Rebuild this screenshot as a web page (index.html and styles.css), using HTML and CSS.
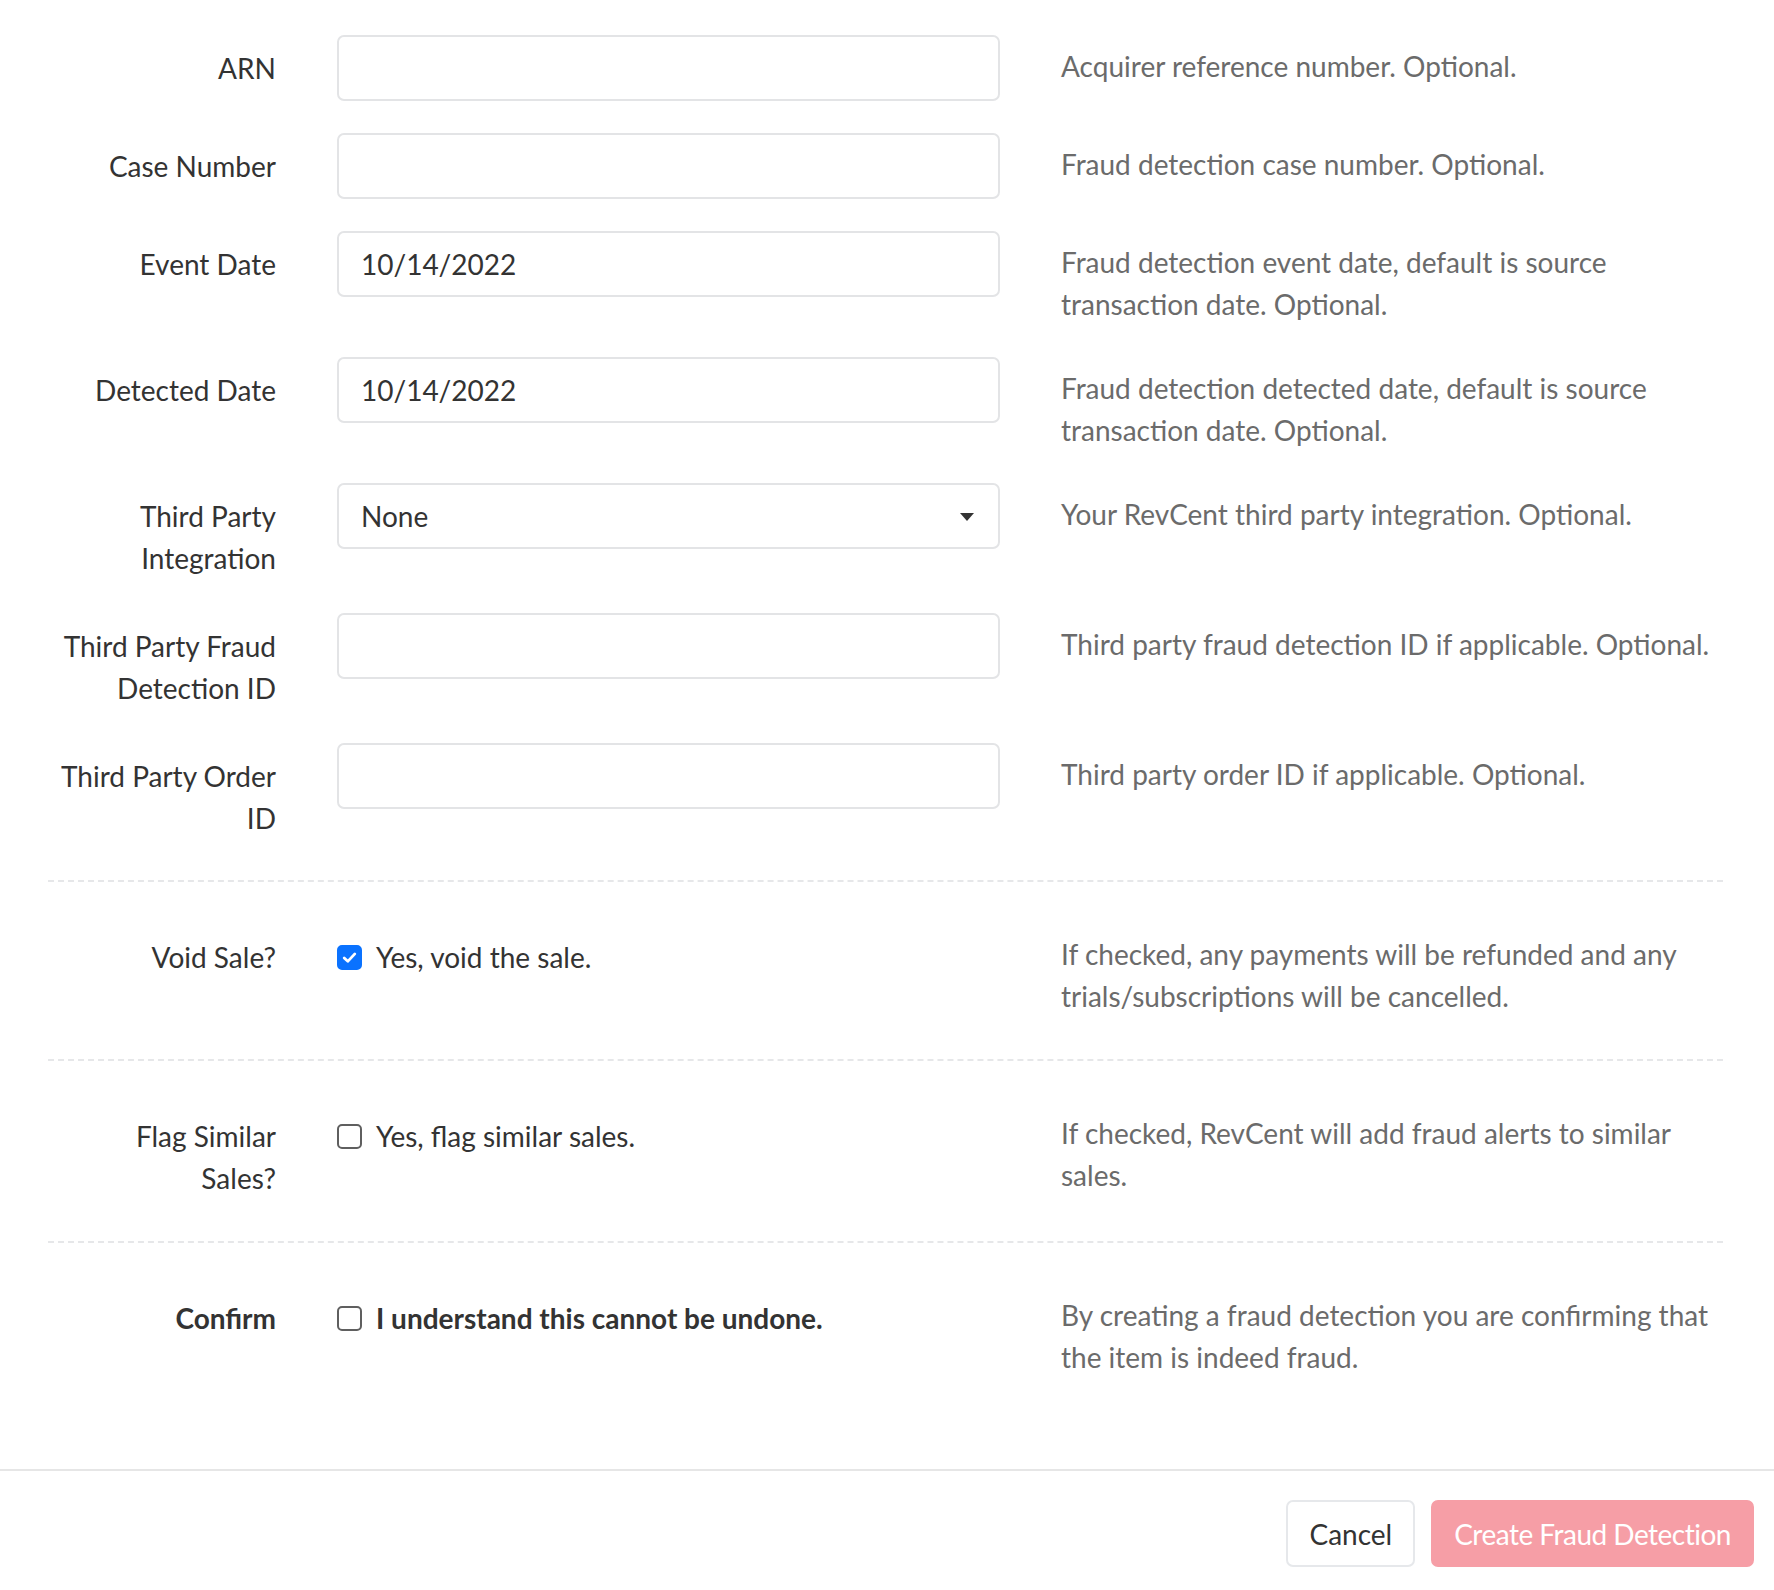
FILE: index.html
```html
<!DOCTYPE html>
<html>
<head>
<meta charset="utf-8">
<link rel="stylesheet" href="styles.css">
</head>
<body>
<div class="modal">
  <div class="modal-body">
    <div class="fields">
      <div class="row">
        <label class="lbl">ARN</label>
        <div class="ctl"><input class="form-control" type="text" value=""></div>
        <div class="help">Acquirer reference number. Optional.</div>
      </div>
      <div class="row">
        <label class="lbl">Case Number</label>
        <div class="ctl"><input class="form-control" type="text" value=""></div>
        <div class="help">Fraud detection case number. Optional.</div>
      </div>
      <div class="row">
        <label class="lbl">Event Date</label>
        <div class="ctl"><input class="form-control" type="text" value="10/14/2022"></div>
        <div class="help">Fraud detection event date, default is source transaction date. Optional.</div>
      </div>
      <div class="row">
        <label class="lbl">Detected Date</label>
        <div class="ctl"><input class="form-control" type="text" value="10/14/2022"></div>
        <div class="help">Fraud detection detected date, default is source transaction date. Optional.</div>
      </div>
      <div class="row">
        <label class="lbl">Third Party Integration</label>
        <div class="ctl"><div class="select">None</div></div>
        <div class="help">Your RevCent third party integration. Optional.</div>
      </div>
      <div class="row">
        <label class="lbl">Third Party Fraud Detection ID</label>
        <div class="ctl"><input class="form-control" type="text" value=""></div>
        <div class="help">Third party fraud detection ID if applicable. Optional.</div>
      </div>
      <div class="row">
        <label class="lbl">Third Party Order ID</label>
        <div class="ctl"><input class="form-control" type="text" value=""></div>
        <div class="help">Third party order ID if applicable. Optional.</div>
      </div>
    </div>

    <div class="section">
      <div class="row check-row">
        <label class="lbl">Void Sale?</label>
        <div class="ctl"><div class="check"><span class="box checked"><svg viewBox="0 0 16 16" width="17" height="17"><path d="M3 8.4 L6.4 11.6 L13 4.6" fill="none" stroke="#fff" stroke-width="2.6" stroke-linecap="round" stroke-linejoin="round"/></svg></span><span>Yes, void the sale.</span></div></div>
        <div class="help">If checked, any payments will be refunded and any trials/subscriptions will be cancelled.</div>
      </div>
    </div>

    <div class="section">
      <div class="row check-row">
        <label class="lbl">Flag Similar Sales?</label>
        <div class="ctl"><div class="check"><span class="box"></span><span>Yes, flag similar sales.</span></div></div>
        <div class="help">If checked, RevCent will add fraud alerts to similar sales.</div>
      </div>
    </div>

    <div class="section last">
      <div class="row check-row">
        <label class="lbl bold">Confirm</label>
        <div class="ctl"><div class="check bold"><span class="box"></span><span>I understand this cannot be undone.</span></div></div>
        <div class="help">By creating a fraud detection you are confirming that the item is indeed fraud.</div>
      </div>
    </div>
  </div>
  <div class="modal-footer">
    <button class="btn btn-light" type="button">Cancel</button>
    <button class="btn btn-danger" type="button">Create Fraud Detection</button>
  </div>
</div>
</body>
</html>
```

FILE: styles.css
```css
* { box-sizing: border-box; }
html, body { margin: 0; padding: 0; background: #fff; }
body {
  font-family: "Source Sans Pro", Lato, "Liberation Sans", sans-serif;
  font-size: 28px;
  line-height: 42px;
  color: #333;
  width: 1774px;
  height: 1590px;
  overflow: hidden;
}
.modal { width: 1774px; }
.modal-body { padding: 35px 51px 0 48px; }
.row {
  display: grid;
  grid-template-columns: 228px 663px 662px;
  column-gap: 61px;
  margin-bottom: 32px;
  align-items: start;
}
.lbl {
  text-align: right;
  padding-top: 12px;
  padding-bottom: 2px;
  padding-left: 10px;
  color: #333;
}
.lbl.bold { font-weight: 700; }
.help {
  padding-top: 10px;
  color: #6b6b6b;
}
.form-control {
  display: block;
  width: 100%;
  height: 66px;
  padding: 0 22px;
  border: 2px solid #e3e4e6;
  border-radius: 7px;
  font: inherit;
  color: #333;
  background: #fff;
  outline: none;
}
.select {
  position: relative;
  height: 66px;
  padding: 10px 22px;
  border: 2px solid #e3e4e6;
  border-radius: 7px;
  color: #333;
}
.select::after {
  content: "";
  position: absolute;
  right: 24px;
  top: 28px;
  border-left: 7px solid transparent;
  border-right: 7px solid transparent;
  border-top: 8px solid #333;
}
.fields { padding-bottom: 1px; }
.fields .row:last-child { margin-bottom: 38px; }
.section {
  border-top: 2px dashed #e6e7e9;
  padding-top: 51px;
  padding-bottom: 42px;
}
.section .row { margin-bottom: 0; }
.section.last { padding-bottom: 91px; }
.check-row .lbl { padding-top: 3px; padding-bottom: 0; }
.check-row .help { padding-top: 0; }
.check-row .ctl { padding-top: 3px; }
.check {
  display: flex;
  align-items: center;
  gap: 14px;
  color: #333;
}
.check.bold { font-weight: 700; }
.box {
  flex: none;
  width: 25px;
  height: 25px;
  border: 2px solid #5f5f5f;
  border-radius: 5px;
  background: #fff;
  display: flex;
  align-items: center;
  justify-content: center;
}
.box.checked {
  background: #0a72ff;
  border-color: #0a72ff;
}
.modal-footer {
  border-top: 2px solid #e6e6e6;
  display: flex;
  justify-content: flex-end;
  gap: 16px;
  padding: 29px 20px 23px;
}
.btn {
  font: inherit;
  height: 67px;
  padding: 0 21px;
  border-radius: 7px;
  border: 2px solid transparent;
}
.btn-light {
  background: #fff;
  border-color: #e6e8eb;
  color: #333;
}
.btn-danger {
  background: #f69ea6;
  border-color: #f69ea6;
  color: #fff;
  letter-spacing: -0.5px;
}
```
